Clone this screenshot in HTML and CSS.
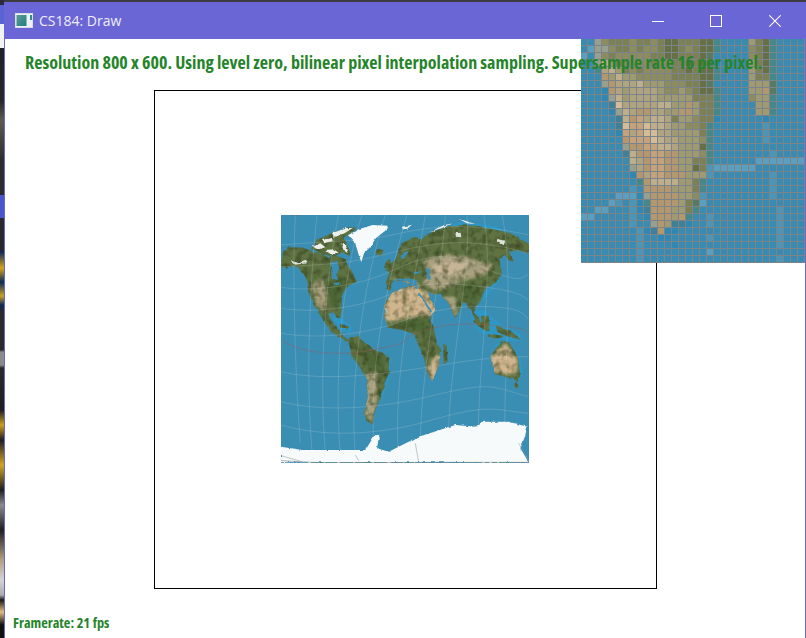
FILE: index.html
```html
<!DOCTYPE html>
<html lang="en">
<head>
<meta charset="utf-8">
<title>CS184: Draw</title>
<link rel="stylesheet" href="styles.css">
</head>
<body>
<div class="desktop">
  <div class="wallpaper-strip"></div>
  <div class="window">
    <header class="titlebar">
      <svg class="app-icon" viewBox="0 0 18 15" width="18" height="15" aria-hidden="true">
        <defs>
          <linearGradient id="iconfill" x1="0" y1="0" x2="1" y2="1">
            <stop offset="0" stop-color="#5f9a90"/>
            <stop offset="1" stop-color="#1f7f88"/>
          </linearGradient>
        </defs>
        <rect x="0" y="0" width="18" height="15" fill="#d9dde6"/>
        <rect x="1" y="1" width="16" height="13" fill="#eef0f4"/>
        <rect x="1.5" y="2" width="10" height="11" fill="url(#iconfill)"/>
        <rect x="15" y="2" width="2" height="5" fill="#2f8f88"/>
      </svg>
      <span class="app-title">CS184: Draw</span>
      <div class="controls">
        <svg class="ctl ctl-min" viewBox="0 0 12 12" width="12" height="12" aria-hidden="true"><path d="M0 6.5H12" stroke="#fff" fill="none"/></svg>
        <svg class="ctl ctl-max" viewBox="0 0 12 12" width="12" height="12" aria-hidden="true"><rect x=".5" y=".5" width="11" height="11" stroke="#fff" fill="none"/></svg>
        <svg class="ctl ctl-close" viewBox="0 0 12 12" width="12" height="12" aria-hidden="true"><path d="M.3 .3L11.7 11.7M11.7 .3L.3 11.7" stroke="#fff" stroke-width="1.05" fill="none"/></svg>
      </div>
    </header>
    <main class="canvas">
      <p class="hud hud-top">Resolution 800 x 600. Using level zero, bilinear pixel interpolation sampling. Supersample rate 16 per pixel.</p>
      <div class="frame">
        <svg class="map" viewBox="17 15 744 744" width="248" height="248" aria-label="World map texture">
          <defs>
            <filter id="terrain" filterUnits="userSpaceOnUse" x="17" y="15" width="744" height="744" color-interpolation-filters="sRGB">
              <feTurbulence type="fractalNoise" baseFrequency=".05" numOctaves="3" seed="4" result="n"/>
              <feDisplacementMap in="SourceGraphic" in2="n" scale="9" xChannelSelector="R" yChannelSelector="G" result="d"/>
              <feGaussianBlur in="d" stdDeviation="1.3" result="b"/>
              <feTurbulence type="fractalNoise" baseFrequency=".05" numOctaves="2" seed="9" result="m"/>
              <feColorMatrix in="m" type="matrix" values="0 0 0 0 .17  0 0 0 0 .21  0 0 0 0 .08  1.4 0 0 0 -.6" result="mot"/>
              <feGaussianBlur in="mot" stdDeviation="1.5" result="mots"/>
              <feComposite in="mots" in2="b" operator="in" result="mm"/>
              <feMerge><feMergeNode in="b"/><feMergeNode in="mm"/></feMerge>
            </filter>
            <filter id="coast" filterUnits="userSpaceOnUse" x="17" y="15" width="744" height="744" color-interpolation-filters="sRGB">
              <feTurbulence type="fractalNoise" baseFrequency=".06" numOctaves="3" seed="12" result="n"/>
              <feDisplacementMap in="SourceGraphic" in2="n" scale="9" xChannelSelector="R" yChannelSelector="G" result="d"/>
              <feGaussianBlur in="d" stdDeviation="1"/>
            </filter>
            <filter id="wash" x="-30%" y="-30%" width="160%" height="160%"><feGaussianBlur stdDeviation="5"/></filter>
            <filter id="shelf" x="-10%" y="-10%" width="120%" height="120%"><feGaussianBlur stdDeviation="2"/></filter>
            <path id="landmass" d="
              M20 170L25 130 40 115 80 115 110 125 140 135 160 148 175 135 205 150 225 180 238 208 243 214 216 226 196 258 196 298 192 322 184 320 176 302 160 308 160 326 180 352 196 370 208 392 218 392 198 382 165 358 138 316 118 285 100 240 100 218 90 195 70 170 50 165 32 174Z
              M110 115L130 90 175 70 220 55 240 55 205 85 225 135 200 125 160 135Z
              M220 390L255 390 290 420 320 430 340 445 338 490 325 520 315 560 295 605 290 640 275 630 270 610 280 560 275 500 258 475 235 440 225 410Z
              M330 282L352 250 375 240 425 226 440 260 470 305 462 332 472 350 480 390 495 420 490 460 470 508 460 490 447 440 435 410 425 390 420 372 390 360 340 350 330 320Z
              M505 405L512 408 514 455 508 460Z
              M335 175L362 150 380 102 420 84 440 90 465 72 500 56 560 48 605 50 660 62 705 72 760 104 760 126 720 120 695 120 712 152 700 148 690 130 672 146 672 178 655 200 640 222 622 248 612 272 600 292 592 304 612 332 604 330 586 298 574 276 560 276 546 310 540 322 525 282 498 252 472 250 450 236 478 300 470 308 430 246 420 226 390 214 352 206 340 240 334 216 346 190Z
              M645 214L664 192 676 180 676 196 662 214 640 228Z
              M600 326L640 360 632 362 596 334Z M620 320L638 320 640 352 622 350Z M665 350L700 362 730 385 700 378 668 364Z M640 372L680 380 668 382 640 378Z
              M648 440L680 395 700 400 725 440 731 485 725 510 700 500 660 490Z
              M720 520L726 522 726 532 720 530Z
              M304 124L322 122 318 132 304 132Z
              M331 160L342 150 346 172 335 180Z
              M225 384L252 382 250 392 228 392Z M196 344L220 352 216 356 198 350Z"/>
            <mask id="landmask" maskUnits="userSpaceOnUse" x="17" y="15" width="744" height="744">
              <use href="#landmass" class="mask-shape"/>
            </mask>
          </defs>
          <rect x="17" y="15" width="744" height="744" fill="#3a8db3"/>

          <!-- shallow seas -->
          <g class="shelf" filter="url(#shelf)">
            <path d="M590 300L625 300 665 335 735 372 740 392 690 392 620 372 585 330Z"/>
            <path d="M180 310L232 352 224 370 196 360 172 326Z"/>
            <path d="M650 410L690 385 735 440 742 490 730 515 725 470 690 410Z"/>
            <path d="M470 60L560 36 660 48 745 90 700 66 600 46 510 50Z"/>
            <path d="M322 430L345 445 344 495 322 565 306 602 315 560 335 490Z"/>
            <path d="M225 205L250 214 222 234Z"/>
            <path d="M626 250L645 232 672 192 680 200 650 240 620 280Z"/>
          </g>

          <!-- land -->
          <g filter="url(#terrain)">
            <use href="#landmass" class="forest"/>
            <g mask="url(#landmask)">
              <g filter="url(#wash)">
                <path class="sand" d="M315 305L355 232 425 216 450 260 490 315 440 316 390 325 325 338Z"/>
                <path class="sand" d="M445 240L485 260 500 305 470 315Z"/>
                <path class="sand" d="M458 470L480 436 505 440 490 516 462 516Z"/>
                <path class="steppe" d="M445 150L520 132 575 142 655 165 628 195 590 205 560 212 522 232 480 242 440 222 455 190Z"/>
                <path class="pale" d="M470 166L540 148 592 165 540 192 490 207Z"/>
                <path class="steppe" d="M505 258L540 262 548 325 530 305Z"/>
                <path class="steppe" d="M108 225L140 203 154 250 152 308 125 288Z"/>
                <path class="steppe" d="M270 498L305 480 305 570 290 640 262 600Z"/>
                <path class="sand" d="M640 445L690 400 726 450 726 492 700 494 650 484Z"/>
                <path class="steppe" d="M350 205L420 215 440 235 400 225 350 225Z"/>
                <path class="deep" d="M560 225L610 225 610 270 580 285Z"/>
                <path class="deep" d="M250 400L325 440 330 490 285 485Z"/>
                <path class="deep" d="M365 332L450 322 475 385 430 365 365 352Z"/>
                <path class="deep" d="M150 215L215 205 195 290 165 290Z"/>
              </g>
            </g>
          </g>

          <!-- inland seas -->
          <g filter="url(#coast)">
            <path class="sea" d="M166 156L188 153 192 176 184 196 188 210 172 206 168 188Z"/>
            <path class="sea" d="M176 218L194 217 190 225 178 226Z"/>
            <path class="sea" d="M376 138L390 126 402 122 394 134 386 144 380 148Z"/>
            <path class="sea" d="M352 208L390 204 420 210 424 222 390 214Z"/>
            <path class="sea" d="M414 185L438 184 434 191 418 192Z"/>
            <path class="sea" d="M455 174L464 177 466 206 458 210 453 194Z"/>
            <path class="sea" d="M410 212L430 226 428 236 402 218Z"/>
            <path class="sea" d="M432 248L470 304 466 308 428 250Z"/>
          </g>

          <!-- graticule -->
          <g class="grid-lines">
            <path d="M17 105C120 95 260 95 350 75S560 30 760 75"/>
            <path d="M17 170C100 165 200 165 300 140S500 90 600 100 720 120 760 130"/>
            <path d="M17 232C110 245 230 230 320 195S480 105 620 170 740 190 760 195"/>
            <path d="M17 295C120 310 240 295 340 255S500 215 620 230 740 260 760 270"/>
            <path d="M17 370C140 390 270 370 360 340S520 285 640 290 740 320 760 325"/>
            <path d="M17 485C120 510 260 500 400 480S620 440 760 440"/>
            <path d="M17 575C130 605 300 600 480 555S660 535 760 560"/>
            <path d="M17 645C140 680 300 680 470 630S660 600 760 610"/>
            <path d="M60 15C50 200 60 500 75 700"/>
            <path d="M125 15C105 200 90 500 110 720"/>
            <path d="M190 15C150 200 130 500 150 725"/>
            <path d="M260 15C200 200 175 500 195 730"/>
            <path d="M330 15C270 200 220 500 240 735"/>
            <path d="M395 15C340 200 270 500 300 735"/>
            <path d="M450 15C420 200 350 500 370 740"/>
            <path d="M510 15C500 200 430 500 435 740"/>
            <path d="M575 15C590 200 510 500 520 740"/>
            <path d="M625 15C660 200 600 500 610 740"/>
            <path d="M680 15C720 200 680 500 690 740"/>
          </g>
          <path class="tropic" d="M385 392C440 350 540 335 640 345S740 355 760 368"/>
          <path class="tropic" d="M20 390C70 430 190 440 290 420S380 400 390 390"/>

          <!-- ice -->
          <g filter="url(#coast)">
            <path class="snow" d="M218 76L250 58 292 45 337 47 330 62 302 84 285 110 266 130 258 156 250 134 240 100Z"/>
            <path class="ice" d="M112 110L135 100 150 112 130 118Z"/>
            <path class="ice" d="M150 120L175 118 190 128 165 132Z"/>
            <path class="ice" d="M170 70L212 54 232 54 210 68 196 76 176 80Z"/>
            <path class="ice" d="M140 90L170 84 172 94 146 100Z"/>
            <path class="ice" d="M196 100L212 108 220 130 204 118Z"/>
            <path class="ice" d="M380 50L410 44 396 56 382 58Z"/>
            <path class="ice" d="M462 66L500 48 530 40 500 54Z"/>
            <path class="ice" d="M550 26L600 42 575 40Z"/>
            <path class="snowy" d="M46 150L70 160 92 152 96 160 60 164Z"/>
            <path class="snowy" d="M540 70L556 68 558 82 542 80ZM665 86L690 92 684 108 670 98Z"/>
            <path class="snow" d="M17 710L80 720 200 720 270 720 298 676 312 674 305 715 340 725 430 680 540 645 600 650 622 635 700 635 756 650 746 690 735 715 760 757 17 757Z"/>
          </g>
          <path class="ridge" d="M17 737L80 755M730 700L760 750M240 735L250 752M420 700L430 757"/>
          <path class="edge" d="M17 15V40M45 16H75M17 752L130 758 520 757 761 757"/>
        </svg>
      </div>
      <aside class="zoom-lens" id="lens" aria-label="Pixel inspector"></aside>
      <p class="hud hud-bottom">Framerate: 21 fps</p>
    </main>
  </div>
</div>
<script src="script.js"></script>
</body>
</html>
```
FILE: styles.css
```css
* { box-sizing: border-box; }
html, body { margin: 0; height: 100%; overflow: hidden; }
body { font-family: "Open Sans", "Liberation Sans", sans-serif; }

.desktop {
  display: flex;
  width: 806px;
  height: 638px;
  padding-top: 2px;
  background: #3b3b40;
  position: relative;
}
.wallpaper-strip {
  position: absolute;
  left: 0; top: 0; bottom: 0;
  width: 4px;
  background: linear-gradient(to bottom,
    #2a2b3c 0, #2a2b3c 5px, #5a63d6 5px, #5a63d6 24px, #f2f2f4 24px, #f2f2f4 48px,
    #20202a 48px, #26262a 100px, #5c5a50 120px, #2c2c30 160px, #2a2a30 195px,
    #4a55cc 195px, #4a55cc 218px, #2a2a30 218px, #26262c 250px,
    #0d2a55 252px, #d6a520 268px, #0d2a55 282px, #c8a228 296px, #0d2a55 305px,
    #2a2a2e 312px, #2a2a2e 350px, #8a8a8a 352px, #8a8a8a 365px, #2a2a2e 368px,
    #1e1e22 410px, #caa020 425px, #1e1e22 440px, #d0a428 465px, #1e1e22 490px,
    #8c8c90 505px, #1e1e22 530px, #b0a080 560px, #d4d4d8 580px, #aaaab0 595px,
    #1a1a1a 600px, #e0c080 612px, #101010 625px, #101010 638px);
}
.window {
  margin-left: 4px;
  flex: 1;
  display: flex;
  flex-direction: column;
  border-left: 1px solid #6a66d6;
  border-right: 1px solid #6a66d6;
  background: #fff;
  min-width: 0;
}
.titlebar {
  height: 37px;
  flex: none;
  display: flex;
  align-items: center;
  background: #6a66d6;
  margin-left: -1px;
  margin-right: -1px;
  padding-left: 11px;
  color: #f0effc;
}
.app-icon { flex: none; }
.app-title {
  margin-left: 6px;
  font-size: 14px;
  font-family: "Open Sans", sans-serif;
  line-height: 20px;
}
.controls {
  margin-left: auto;
  display: flex;
  align-items: center;
  gap: 46px;
  padding-right: 25px;
}
.ctl { display: block; }
.ctl-close { margin-left: 1px; }

.canvas {
  position: relative;
  flex: 1;
  display: flex;
  flex-direction: column;
  min-height: 0;
}
.hud {
  margin: 0;
  color: #25842a;
  font-weight: 700;
  font-stretch: 75%;
  white-space: nowrap;
  position: relative;
  z-index: 2;
}
.hud-top {
  padding: 11px 0 0 20px;
  height: 51px;
  font-size: 18px;
  line-height: 24px;
}
.hud-bottom {
  margin-top: auto;
  padding: 0 0 5px 8px;
  font-size: 14.3px;
  line-height: 20px;
}
.frame {
  margin-left: 149px;
  width: 503px;
  height: 499px;
  border: 1px solid #000;
  padding: 124px 0 0 126px;
  flex: none;
}
.map { display: block; }
.mask-shape { fill: #fff; stroke: #fff; stroke-width: 5; }
.grid-lines path { fill: none; stroke: #dfe6e6; stroke-opacity: .36; stroke-width: 1.6; }
.tropic { fill: none; stroke: #a8544f; stroke-opacity: .7; stroke-width: 1.6; }
.shelf path { fill: #2f97c6; }
.forest { fill: #5e7242; stroke: #5e7242; stroke-width: 5; stroke-linejoin: round; }
.sea { fill: #3a8db3; }
.snow { fill: #f7fafb; }
.snowy { fill: #dfe3dc; }
.ice { fill: #eceee9; }
.sand { fill: #cfb58d; }
.pale { fill: #c6b595; }
.steppe { fill: #a8a07e; }
.deep { fill: #4a6433; opacity: .7; }
.ridge { fill: none; stroke: #8a9488; stroke-width: 1.5; }
.edge { fill: none; stroke: #6a6e72; stroke-width: 1.5; }

.zoom-lens {
  position: absolute;
  top: 0;
  right: 0;
  width: 224px;
  height: 224px;
  display: grid;
  grid-template-columns: repeat(32, 6px);
  grid-auto-rows: 6px;
  gap: 1px;
  background: #7b8589;
  z-index: 1;
}
.px-b { background: #3a8bb1; }
.px-B { background: #2f88b4; }
.px-l { background: #4d95b6; }
.px-L { background: #5a9fbf; }
.px-t { background: #3f7f98; }
.px-h { background: #46878a; }
.px-m { background: #587a60; }
.px-g { background: #667046; }
.px-o { background: #7c8054; }
.px-O { background: #8d8c60; }
.px-k { background: #a09a72; }
.px-s { background: #afa47f; }
.px-S { background: #bfae8c; }
.px-r { background: #b4966f; }
.px-p { background: #c6a27c; }
.px-P { background: #d4bc98; }
.px-G { background: #97a08f; }
```
FILE: script.js
```js
var rows = [
  "bbGOoooO ooOoggoo ogghbbbb koghbbbb",
  "bLGGOooO oOOoggoO ogghbbbb Ooghbbbb",
  "LbGOoOOO OOooggoo ogmbbbbb Ooghbbbb",
  "bbGSkoOO OOoOOoog ogmBbbbb koghbbbb",
  "bbhsSkoO oOOOOoog ogghbbbb koghbbbb",
  "bbbrkSkk OOOOOooo ogghbbbb koohbbbb",
  "bbbGrsss SkkkOOOo ogmbbbbb kkkmbbbb",
  "bbbBrsks ssskOOkO ogghbbbb kkrmbbbb",
  "bbbBGSks ssskkkkk ooohbbbb Okkhbbbb",
  "bbbbtPss sssSSkkr koohbbbb bkkhbbbb",
  "bbbbBGSs rrsskkrr koohbbbb bkkhbbbb",
  "bbbbbtSr psSSsokk OooBbbbb bbBbbbbb",
  "bbbbbtPp pPSSskkO Oohbbbbb bblbbbbb",
  "bbbbbBps pPPsskkk kohbbbbb bblbbbbb",
  "bbbbbbrp ppPSsskk kOhbbbbb bblbbbbb",
  "bbbbbbGr rppSSskk kghbbbbb bbbbbbbb",
  "bbbbbbtS rrpprrkk kOhbbbbb bbblbbbb",
  "bbbbbbbS srpprrkk oohbbbbb bLLLLLLL",
  "bbbbbbbG srpprrkk golLLLLL Lbbbbbbb",
  "bbbbbbbB rspprrrk kklbbbbb bbblbbbb",
  "bbbbbbbb hrSSSSkk ohbbbbbb bbblbbbb",
  "bbbbbbbl brrrrkkk ohbbbbbb bbblbbbb",
  "bbbbbLLL BGrrrrkk Olbbbbbb bbblbbbb",
  "bbbbLlbl Bhrrrrko mLbbbbbb bbbbbbbb",
  "bbLLbbbl Btrrrkko hbbbbbbb bbbblbbb",
  "LLbbbbbl bBrrrkrh bblbbbbb bbbblbbb",
  "bbbbbbbl bbGrkttB bblbbbbb bbbblbbb",
  "bbbbbbbb lBtrBBbb bbbbbbbb bbbblbbb",
  "bbbbbbbb lbbBBbbb bblbbbbb bbbblbbb",
  "bbbbbbbb lbbbbBbb bbbbbbbb bbbblbbb",
  "bbbbbbbb lbbbbbbb bbLbbbbb bbbbbbbb",
  "bbbbbbbb lbbbbbbb bbbbbbbb bbbblbbb"
];
var lens = document.getElementById("lens");
rows.forEach(function (row) {
  row.replace(/ /g, "").split("").forEach(function (code) {
    var cell = document.createElement("div");
    cell.className = "px-" + code;
    lens.appendChild(cell);
  });
});
```
